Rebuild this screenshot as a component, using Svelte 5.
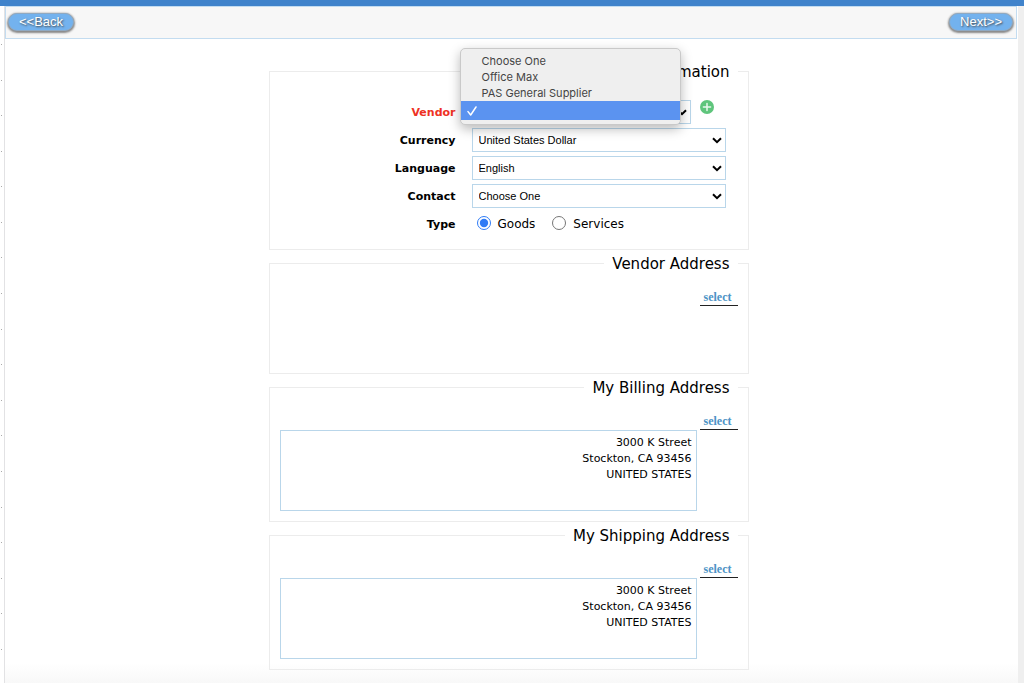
<script lang="ts">
  interface Field {
    id: string
    label: string
    options: string[]
  }

  interface AddressBlock {
    title: string
    lines: string[]
  }

  const vendors = ['Choose One', 'Office Max', 'PAS General Supplier', '']

  const fields: Field[] = [
    { id: 'currency', label: 'Currency', options: ['United States Dollar'] },
    { id: 'language', label: 'Language', options: ['English'] },
    { id: 'contact', label: 'Contact', options: ['Choose One'] }
  ]

  const companyAddress = ['3000 K Street', 'Stockton, CA 93456', 'UNITED STATES']

  const addresses: AddressBlock[] = [
    { title: 'Vendor Address', lines: [] },
    { title: 'My Billing Address', lines: companyAddress },
    { title: 'My Shipping Address', lines: companyAddress }
  ]

  let vendor = $state('')
  let type = $state('goods')
  let menuOpen = $state(true)

  function pickVendor(name: string) {
    vendor = name
    menuOpen = false
  }
</script>

<div class="page">
  <div class="topbar"></div>
  <div class="body">
    <div class="rail">
      {#each Array(18) as _}
        <span class="tick"></span>
      {/each}
    </div>

    <main class="content">
      <nav class="toolbar">
        <button class="nav-button" type="button">&lt;&lt;Back</button>
        <button class="nav-button" type="button">Next&gt;&gt;</button>
      </nav>

      <form class="form">
        <fieldset class="vendor-info">
          <legend>Vendor Information</legend>
          <div class="rows">
            <label class="row-label required" for="vendor">Vendor</label>
            <div class="vendor">
              <select id="vendor" class="vendor-select" bind:value={vendor}>
                {#each vendors as name}
                  <option value={name}>{name}</option>
                {/each}
              </select>
              <button class="add" type="button" aria-label="Add vendor">
                <svg viewBox="0 0 14 14" width="14" height="14">
                  <circle cx="7" cy="7" r="7" fill="#5fc57c" />
                  <path d="M7 3.4v7.2M3.4 7h7.2" stroke="#e9f8ed" stroke-width="1.5" stroke-linecap="round" />
                </svg>
              </button>

              {#if menuOpen}
                <div class="menu" role="listbox" aria-label="Vendor">
                  {#each vendors as name}
                    <button
                      class="menu-item"
                      class:selected={name === vendor}
                      type="button"
                      role="option"
                      aria-selected={name === vendor}
                      onclick={() => pickVendor(name)}
                    >
                      <span class="check">
                        {#if name === vendor}
                          <svg viewBox="0 0 10 10" width="10" height="10">
                            <path d="M1 5.6L3.7 9 9 1" fill="none" stroke="#fff" stroke-width="1.5" stroke-linecap="round" stroke-linejoin="round" />
                          </svg>
                        {/if}
                      </span>
                      {name}
                    </button>
                  {/each}
                </div>
              {/if}
            </div>

            {#each fields as field}
              <label class="row-label" for={field.id}>{field.label}</label>
              <select id={field.id}>
                {#each field.options as option}
                  <option>{option}</option>
                {/each}
              </select>
            {/each}

            <span class="row-label" id="type-label">Type</span>
            <div class="radios" role="radiogroup" aria-labelledby="type-label">
              <label><input type="radio" name="type" value="goods" bind:group={type} />Goods</label>
              <label><input type="radio" name="type" value="services" bind:group={type} />Services</label>
            </div>
          </div>
        </fieldset>

        {#each addresses as block}
          <fieldset>
            <legend>{block.title}</legend>
            <div class="address">
              <a class="select-link" href="#select">select</a>
              {#if block.lines.length > 0}
                <address>
                  {#each block.lines as line}
                    <div>{line}</div>
                  {/each}
                </address>
              {:else}
                <div class="address-empty"></div>
              {/if}
            </div>
          </fieldset>
        {/each}
      </form>
    </main>

    <div class="gutter"></div>
  </div>
</div>

<style>
  :global(body) {
    background: #fff;
  }

  .page {
    display: flex;
    flex-direction: column;
    min-height: 100vh;
    font-family: Verdana, 'DejaVu Sans', sans-serif;
    font-size: 11px;
    color: #000;
  }

  .topbar {
    height: 6px;
    background: #4083cb;
  }

  .body {
    display: flex;
    flex: 1;
  }

  .rail {
    display: flex;
    flex-direction: column;
    justify-content: space-between;
    box-sizing: border-box;
    width: 4px;
    padding: 38px 1px 33px;
  }

  .tick {
    width: 1px;
    height: 1px;
    background: #aaa;
  }

  .content {
    flex: 1;
    border-left: 1px solid #e2e2e4;
    background: linear-gradient(to top, #f8f8f8, #fff 20px);
  }

  .gutter {
    width: 6px;
    background: #efefef;
  }

  .toolbar {
    display: flex;
    align-items: center;
    justify-content: space-between;
    box-sizing: border-box;
    height: 33px;
    margin-right: 1px;
    padding: 0 3px 2px 2px;
    background: #f7f7f7;
    border: 1px solid #c3dcf0;
  }

  .nav-button {
    height: 18px;
    padding: 0 10px;
    border: 1px solid #8fa9c2;
    border-radius: 9px;
    background: #73b2ee;
    box-shadow: 0 1px 2px 1px #888;
    color: #fff;
    font-family: Arial, 'Liberation Sans', sans-serif;
    font-size: 13px;
    line-height: 16px;
    text-shadow: 1px 1px 2px #444;
    cursor: pointer;
  }

  .form {
    display: flex;
    flex-direction: column;
    gap: 3px;
    max-width: 480px;
    margin: 0 auto;
    padding: 22px 6px 11px 0;
  }

  fieldset {
    min-width: 0;
    margin: 0;
    padding: 0 10px 10px;
    border: 1px solid #ececec;
  }

  .vendor-info {
    padding-bottom: 4px;
  }

  legend {
    margin-left: auto;
    padding: 2px 8px 0;
    font-size: 15px;
    line-height: 18px;
  }

  .rows {
    display: grid;
    grid-template-columns: 176px 254px;
    grid-auto-rows: 24px;
    column-gap: 16px;
    row-gap: 4px;
    padding: 19px 0 9px;
  }

  .row-label {
    align-self: center;
    text-align: right;
    font-weight: bold;
  }

  .required {
    color: #ee3124;
  }

  select {
    box-sizing: border-box;
    width: 100%;
    height: 24px;
    padding: 0 20px 0 6px;
    border: 1px solid #b9d6ea;
    border-radius: 0;
    appearance: none;
    background: #fff url("data:image/svg+xml,%3Csvg xmlns='http://www.w3.org/2000/svg' width='10' height='7'%3E%3Cpath d='M1 1.2L5 5.2L9 1.2' fill='none' stroke='black' stroke-width='2'/%3E%3C/svg%3E") no-repeat right 3px center;
    color: #000;
    font-family: Arial, 'Liberation Sans', sans-serif;
    font-size: 11px;
  }

  .vendor {
    position: relative;
    display: flex;
    gap: 9px;
  }

  .vendor-select {
    width: 219px;
  }

  .add {
    width: 14px;
    height: 14px;
    padding: 0;
    border: none;
    background: none;
    cursor: pointer;
  }

  .add svg {
    display: block;
  }

  .menu {
    position: absolute;
    top: -52px;
    left: -12px;
    z-index: 1;
    box-sizing: border-box;
    width: 221px;
    padding: 4px 0;
    border: 1px solid #c9c9c9;
    border-radius: 5px;
    background: #efefef;
    box-shadow: 0 4px 12px rgba(0, 0, 0, 0.28);
  }

  .menu-item {
    display: flex;
    align-items: center;
    width: 100%;
    height: 16px;
    padding: 0 6px;
    border: none;
    background: none;
    color: #444;
    font-family: Inter, sans-serif;
    font-size: 11px;
    text-align: left;
  }

  .menu-item.selected {
    height: 19px;
    background: #5b93f0;
    color: #fff;
  }

  .check {
    display: flex;
    width: 15px;
  }

  .radios {
    display: flex;
    align-items: center;
    gap: 17px;
    padding-left: 5px;
    font-size: 12px;
  }

  .radios label {
    display: flex;
    align-items: center;
    gap: 7px;
  }

  .radios input {
    width: 14px;
    height: 14px;
    margin: 0 0 2px;
    accent-color: #2f7bf6;
  }

  .address {
    display: flex;
    flex-direction: column;
    padding-top: 17px;
  }

  .select-link {
    align-self: flex-end;
    box-sizing: border-box;
    width: 38px;
    height: 16px;
    padding-left: 4px;
    border-bottom: 1px solid #222;
    color: #4d93c6;
    font-family: 'Liberation Serif', serif;
    font-size: 12px;
    font-weight: bold;
    line-height: 14px;
    text-decoration: none;
  }

  address {
    box-sizing: border-box;
    height: 81px;
    margin-right: 41px;
    padding: 4px;
    border: 1px solid #b9d6ea;
    font-style: normal;
    line-height: 16px;
    text-align: right;
  }

  .address-empty {
    height: 57px;
  }
</style>
